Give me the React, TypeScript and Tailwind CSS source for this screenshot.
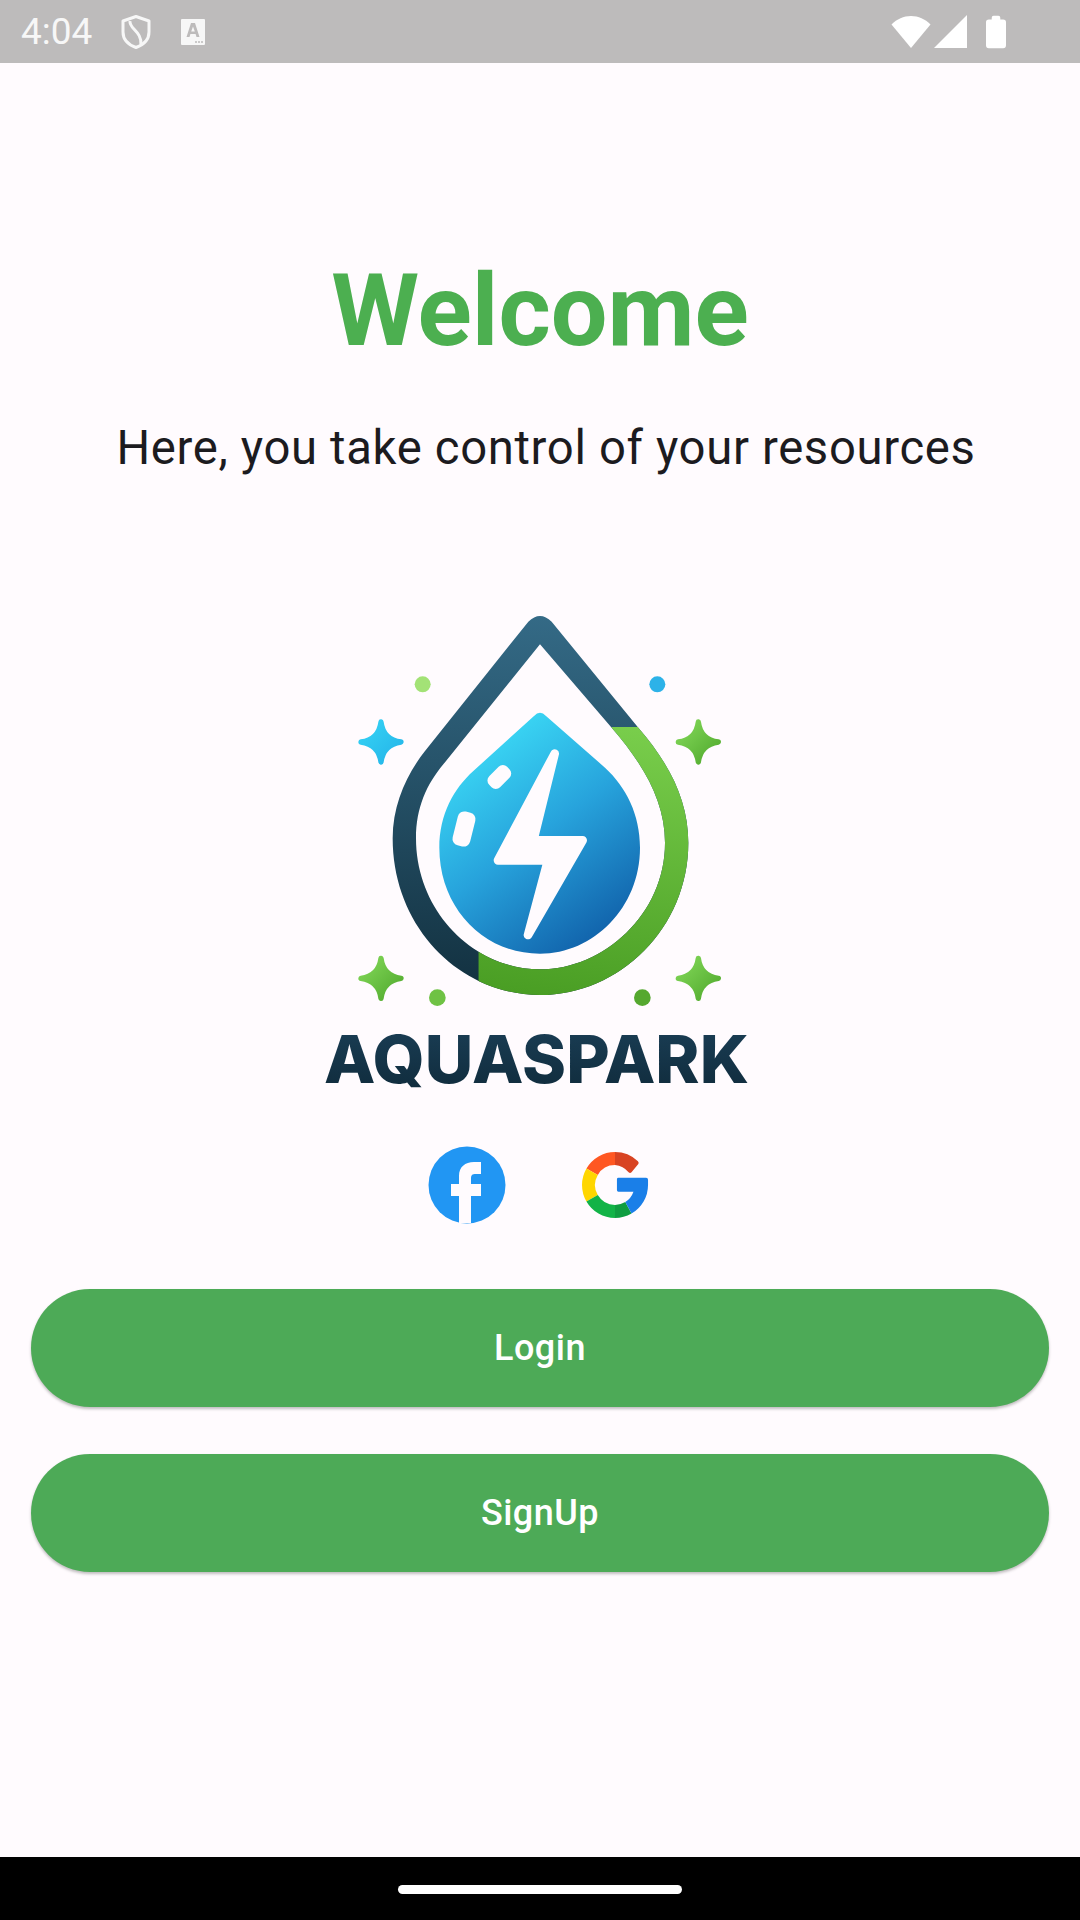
const Sparkle = ({ x, y, fill }: { x: number; y: number; fill: string }) => (
  <path
    transform={`translate(${x} ${y})`}
    fill={fill}
    stroke={fill}
    strokeWidth="16"
    strokeLinejoin="round"
    d="M0,-60 Q7,-7 60,0 Q7,7 0,60 Q-7,7 -60,0 Q-7,-7 0,-60 Z"
  />
);

const RING =
  "M655,62 Q690,28 725,62 L985,380 C1080,490 1135,600 1135,725 C1135,980 930,1182 690,1182 C450,1182 248,980 248,712 C248,610 290,520 345,450 Z M690,130 L905,380 C1000,490 1065,600 1065,725 C1065,940 880,1105 690,1105 C490,1105 318,930 318,712 C318,620 350,550 400,490 Z";

const Logo = () => (
  <svg width="440" height="500" viewBox="0 0 1320 1500" className="block">
    <defs>
      <linearGradient id="dark" x1="0" y1="0" x2="0" y2="1">
        <stop offset="0" stopColor="#346a86" />
        <stop offset="1" stopColor="#12303f" />
      </linearGradient>
      <linearGradient id="green" x1="0.6" y1="0" x2="0.5" y2="1">
        <stop offset="0" stopColor="#8adf5a" />
        <stop offset="1" stopColor="#4a9e24" />
      </linearGradient>
      <linearGradient id="blue" x1="0.2" y1="0" x2="0.8" y2="1">
        <stop offset="0" stopColor="#3fe3fa" />
        <stop offset="0.5" stopColor="#27a3dc" />
        <stop offset="1" stopColor="#0f5ca6" />
      </linearGradient>
      <linearGradient id="word" x1="0" y1="0" x2="0" y2="1">
        <stop offset="0" stopColor="#1b3f57" />
        <stop offset="1" stopColor="#0f2a3a" />
      </linearGradient>
      <linearGradient id="s1" x1="0" y1="0" x2="1" y2="1">
        <stop offset="0" stopColor="#84d95a" />
        <stop offset="1" stopColor="#4fa82c" />
      </linearGradient>
      <linearGradient id="s2" x1="0" y1="0" x2="1" y2="1">
        <stop offset="0" stopColor="#36d3f5" />
        <stop offset="1" stopColor="#24b4e8" />
      </linearGradient>
      <clipPath id="greenClip">
        <polygon points="905,378 1320,378 1320,1300 505,1300 505,1000 905,700" />
      </clipPath>
    </defs>
    <path fill="url(#dark)" fillRule="evenodd" d={RING} />
    <path fill="url(#green)" fillRule="evenodd" clipPath="url(#greenClip)" d={RING} />
    <path
      fill="url(#blue)"
      d="M672,345 Q690,325 708,345 L885,500 C948,558 990,640 990,740 C990,920 850,1058 690,1058 C520,1058 388,920 388,740 C388,640 432,562 490,510 Z"
    />
    <path
      fill="#fffbfe"
      stroke="#fffbfe"
      strokeWidth="26"
      strokeLinejoin="round"
      d="M734,458 L670,718 L818,718 L654,1002 L714,778 L564,778 Z"
    />
    <rect x="530" y="505" width="76" height="46" rx="18" fill="#fffbfe" transform="rotate(-45 568 528)" />
    <rect x="435" y="632" width="54" height="104" rx="20" fill="#fffbfe" transform="rotate(14 462 684)" />
    <Sparkle x={213} y={423} fill="url(#s2)" />
    <Sparkle x={1165} y={423} fill="url(#s1)" />
    <Sparkle x={213} y={1132} fill="url(#s1)" />
    <Sparkle x={1165} y={1132} fill="url(#s1)" />
    <circle cx="338" cy="250" r="24" fill="#a3e276" />
    <circle cx="1042" cy="250" r="24" fill="#2db2e8" />
    <circle cx="382" cy="1190" r="25" fill="#6fc244" />
    <circle cx="997" cy="1190" r="25" fill="#55a82f" />
    <text
      x="42"
      y="1445"
      textLength="1275"
      lengthAdjust="spacingAndGlyphs"
      fill="url(#word)"
      fontFamily="Inter, 'Liberation Sans', sans-serif"
      fontWeight="800"
      fontSize="198"
    >
      AQUASPARK
    </text>
  </svg>
);

const Facebook = () => (
  <svg width="78" height="78" viewBox="0 0 78 78" className="block">
    <circle cx="39" cy="39" r="38.5" fill="#2196f3" />
    <path
      fill="#fffbfe"
      d="M31 77 V50 H23 V38 H31 V30 C31 21 37 16 46 16 H53 V28 H48 C44 28 43 29 43 33 V38 H53 V50 H43 V77 Z"
    />
  </svg>
);

const Google = () => (
  <svg width="68" height="68" viewBox="0 0 70 70" className="block">
    <path fill="#ff5722" d="M35 1 A34 34 0 0 0 5.6 18 L17.3 24.6 A20.5 20.5 0 0 1 35 14.5 Z" />
    <path fill="#d84322" d="M35 1 A34 34 0 0 1 58.6 10.5 Q60 12 59 13.5 L52 22 Q50.5 23.5 49 22 A20.5 20.5 0 0 0 35 14.5 Z" />
    <path fill="#ffd600" d="M5.6 18 A34 34 0 0 0 5.6 52 L17.3 45.4 A20.5 20.5 0 0 1 17.3 24.6 Z" />
    <path fill="#12b347" d="M5.6 52 A34 34 0 0 0 35 69 V55.5 A20.5 20.5 0 0 1 17.3 45.4 Z" />
    <path fill="#0f9d40" d="M35 69 A34 34 0 0 0 52 64.4 L45.6 52.6 A20.5 20.5 0 0 1 35 55.5 Z" />
    <path
      fill="#1a7fe8"
      d="M37 29 Q37 27.5 38.5 27.5 H67 Q69 27.5 69 29.5 V35 A34 34 0 0 1 52 64.4 L45.6 52.6 A20.5 20.5 0 0 0 54 42 H38.5 Q37 42 37 40.5 Z"
    />
  </svg>
);

const PillButton = ({ label }: { label: string }) => (
  <button className="w-full h-[118px] rounded-[59px] bg-[#4daa57] text-white text-[36px] tracking-[0.5px] font-medium shadow-[0_2px_3px_rgba(0,0,0,0.25)]">
    {label}
  </button>
);

export default function App() {
  return (
    <div className="w-[1080px] h-[1920px] flex flex-col bg-[#fffbfe] overflow-hidden font-['Roboto',sans-serif]">
      <div className="h-[63px] shrink-0 bg-[#bdbbbb] flex items-center justify-between pl-[21px] pr-[74px] text-[#f7f7f7]">
        <div className="flex items-center">
          <span className="text-[37px] leading-none">4:04</span>
          <svg width="32" height="36" viewBox="0 0 32 36" className="ml-[28px]" fill="none">
            <path
              d="M16 2.5 L29 7 V18 C29 26 23 31 16 33.5 C9 31 3 26 3 18 V7 Z"
              stroke="#f7f7f7"
              strokeWidth="3"
              strokeLinejoin="round"
            />
            <path d="M10 7 C9 15 22 17 21 31" stroke="#f7f7f7" strokeWidth="3" />
          </svg>
          <svg width="24" height="26" viewBox="0 0 24 26" className="ml-[29px]">
            <path
              fill="#f7f7f7"
              fillRule="evenodd"
              d="M1 0 H23 Q24 0 24 1 V25 Q24 26 23 26 H1 Q0 26 0 25 V1 Q0 0 1 0 Z M10 4 L5.5 18 H8.5 L9.4 15 H14.6 L15.5 18 H18.5 L14 4 Z M12 7.5 L13.8 12.5 H10.2 Z"
            />
            <circle cx="15" cy="23" r="1" fill="#bdbbbb" />
            <circle cx="18" cy="23" r="1" fill="#bdbbbb" />
            <circle cx="21" cy="23" r="1" fill="#bdbbbb" />
          </svg>
        </div>
        <div className="flex items-center">
          <svg width="40" height="34" viewBox="0 0 40 34">
            <path fill="#fff" d="M20 33 L0.5 9.5 C6 4 12.5 1 20 1 C27.5 1 34 4 39.5 9.5 Z" />
          </svg>
          <svg width="33" height="33" viewBox="0 0 33 33" className="ml-[3px]">
            <path fill="#fff" d="M33 0 V33 H0 Z" />
          </svg>
          <svg width="20" height="34" viewBox="0 0 21 34" className="ml-[19px]">
            <path
              fill="#fff"
              d="M6 2 Q6 0 8 0 H13 Q15 0 15 2 V4 H18 Q21 4 21 7 V31 Q21 34 18 34 H3 Q0 34 0 31 V7 Q0 4 3 4 H6 Z"
            />
          </svg>
        </div>
      </div>

      <main className="flex-1 flex flex-col items-center px-[31px]">
        <h1 className="mt-[189px] text-[100.5px] leading-[118px] font-bold text-[#4caf50]">Welcome</h1>
        <p className="mt-[50px] text-[47.25px] leading-[56px] text-[#1c1b1f] tracking-[0.65px] ml-[12px]">
          Here, you take control of your resources
        </p>
        <div className="mt-[125px] ml-[-20px]">
          <Logo />
        </div>
        <div className="mt-[45px] flex items-center gap-[75px] ml-[-3px]">
          <Facebook />
          <Google />
        </div>
        <div className="w-full mt-[65px] flex flex-col gap-[47px]">
          <PillButton label="Login" />
          <PillButton label="SignUp" />
        </div>
      </main>

      <div className="h-[63px] shrink-0 bg-black flex items-center justify-center">
        <div className="w-[284px] h-[9px] rounded-full bg-white mt-[1px]" />
      </div>
    </div>
  );
}
